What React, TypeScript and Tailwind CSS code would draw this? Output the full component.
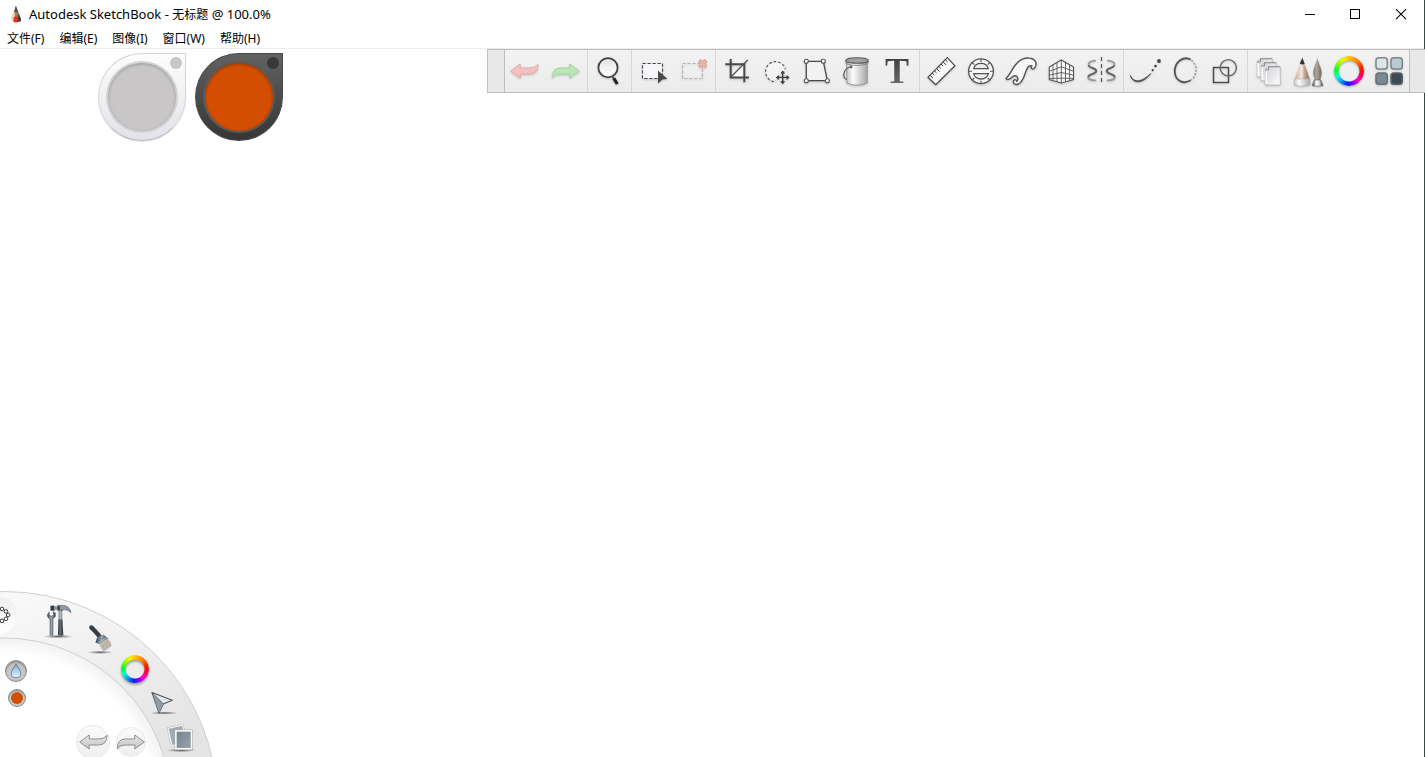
import type { ReactNode } from "react";

const menus = ["文件(F)", "编辑(E)", "图像(I)", "窗口(W)", "帮助(H)"];

function Icon({ children }: { children: ReactNode }) {
  return (
    <svg
      viewBox="0 0 40 42"
      className="h-[42px] w-10 drop-shadow-[0_1px_1px_rgba(0,0,0,0.18)]"
      fill="none"
      stroke="#555"
      strokeWidth="1.4"
      aria-hidden="true"
    >
      {children}
    </svg>
  );
}

function Wheel({ className }: { className: string }) {
  return (
    <span
      className={
        "block rounded-full bg-[conic-gradient(#ffc400_0deg,#ff8000_40deg,#ff1500_80deg,#ff0040_105deg,#ff00d0_135deg,#8a00ff_160deg,#0020ff_188deg,#00a8ff_220deg,#00ffd0_245deg,#00ff20_275deg,#a0ff00_310deg,#fff000_338deg,#ffc400_360deg)] " +
        className
      }
    />
  );
}

const undoPath = "M5.7 21L15.2 14V18H24.5Q30.5 18 33 14.3Q33 24 24.5 24H15.2V28Z";
const redoPath = "M34.3 21L24.8 14V18H15.3Q7.3 18 7.3 28Q9.3 24 15.3 24H24.8V28Z";

type Tool = { label: string; icon: ReactNode };

const groups: { pad: string; tools: Tool[] }[] = [
  {
    pad: "pr-0.5",
    tools: [
      { label: "撤消", icon: <Icon><path d={undoPath} fill="#f3c2be" stroke="#e6aaa6" strokeWidth="1" /></Icon> },
      { label: "重做", icon: <Icon><path d={redoPath} fill="#bde6b8" stroke="#a3d69e" strokeWidth="1" /></Icon> },
    ],
  },
  {
    pad: "pl-px pr-0.5",
    tools: [
      {
        label: "缩放",
        icon: (
          <Icon>
            <circle cx="19" cy="17.7" r="9.6" fill="url(#glass)" stroke="#444" strokeWidth="1.8" />
            <path d="M23.5 26.5L25 29" stroke="#555" strokeWidth="2" />
            <path d="M24.8 28.4L28.3 34" stroke="#222" strokeWidth="3.2" />
          </Icon>
        ),
      },
    ],
  },
  {
    pad: "pl-px pr-0.5",
    tools: [
      {
        label: "选择",
        icon: (
          <Icon>
            <rect x="9.5" y="13.5" width="20" height="15" fill="#f6f6fa" stroke="#444" strokeWidth="1.1" strokeDasharray="3.2 1.8" />
            <path d="M25 20.5L34.5 29L29.5 29.4L25 33.5Z" fill="#4a4a4a" stroke="none" />
          </Icon>
        ),
      },
      {
        label: "取消选择",
        icon: (
          <Icon>
            <rect x="9.5" y="13.5" width="20" height="15" stroke="#b5b5b5" strokeWidth="1.2" strokeDasharray="3.2 1.8" />
            <path d="M26.4 10.4L33 17M33 10.4L26.4 17" stroke="#dc9c98" strokeWidth="3.8" />
            <path d="M27 11L32.4 16.4M32.4 11L27 16.4" stroke="#f0b4b0" strokeWidth="2.2" />
          </Icon>
        ),
      },
    ],
  },
  {
    pad: "pl-px pr-0.5",
    tools: [
      {
        label: "裁剪",
        icon: (
          <Icon>
            <path d="M14 27L27 14V27Z" fill="#fafafa" stroke="none" />
            <path d="M14 27L30.7 10" strokeWidth="1.2" />
            <path d="M13.7 9V27.5H32M8.3 14.3H27.3V32.3" stroke="#484848" strokeWidth="2" />
          </Icon>
        ),
      },
      {
        label: "快速变换",
        icon: (
          <Icon>
            <path d="M17 31.5A10 10 0 1 1 28.3 19" stroke="#555" strokeWidth="1.2" strokeDasharray="2.6 2" fill="#f4f4f4" />
            <path d="M25.7 21.5V33.3M19.8 27.4H31.6" stroke="#3c3c3c" strokeWidth="1.4" />
            <path d="M25.7 20.5L28.2 23.6H23.2ZM25.7 34.3L28.2 31.2H23.2ZM18.8 27.4L21.9 24.9V29.9ZM32.6 27.4L29.5 24.9V29.9Z" fill="#3c3c3c" stroke="none" />
          </Icon>
        ),
      },
      {
        label: "扭曲",
        icon: (
          <Icon>
            <path d="M9.3 11.3H26.3L30.3 30.7H9.3Z" fill="#f2f2f2" stroke="#484848" strokeWidth="1.3" />
            <g fill="#fff" strokeWidth="1.1">
              <circle cx="9.3" cy="11.3" r="2" />
              <circle cx="26.3" cy="11.3" r="2" />
              <circle cx="30.3" cy="30.7" r="2" />
              <circle cx="9.3" cy="30.7" r="2" />
            </g>
          </Icon>
        ),
      },
      {
        label: "填充",
        icon: (
          <Icon>
            <path d="M9.8 11V33Q20 37.5 30.2 33V11Z" fill="url(#metal)" stroke="#8c8c8c" strokeWidth="0.8" />
            <ellipse cx="20" cy="10.5" rx="11.3" ry="2.8" fill="#a2a2a2" stroke="#5a5a5a" strokeWidth="1.1" />
            <path d="M9 11V13.5Q20 17.5 31 13.5V11" strokeWidth="0.8" stroke="#777" />
            <path d="M14 16.7Q7 18.5 6.7 25Q6.8 28.5 9.8 29.5" stroke="#555" strokeWidth="1.1" />
            <circle cx="14" cy="16.7" r="1.5" fill="#666" stroke="none" />
          </Icon>
        ),
      },
      {
        label: "文本",
        icon: (
          <span className="block bg-linear-to-b from-[#333] to-[#777] bg-clip-text text-center font-['Liberation_Serif',serif] text-[36px] leading-[42px] font-bold text-transparent">
            T
          </span>
        ),
      },
    ],
  },
  {
    pad: "pl-px pr-0.5",
    tools: [
      {
        label: "标尺",
        icon: (
          <Icon>
            <path d="M26.3 7.7L34 15.8L14.7 34.7L6.9 27.3Z" fill="#fafafa" stroke="#4a4a4a" strokeWidth="1.2" strokeLinejoin="round" />
            <path d="M9 25.3L12 28.2M11.2 23L13.3 25M13.4 20.8L15.5 22.8M15.6 18.6L18.6 21.5M17.8 16.4L19.9 18.4M20 14.2L22.1 16.2M22.2 12L25.2 14.9M24.4 9.8L26.5 11.8" strokeWidth="1" stroke="#333" />
          </Icon>
        ),
      },
      {
        label: "椭圆标尺",
        icon: (
          <Icon>
            <circle cx="20" cy="21.3" r="12.4" fill="#f7f7f7" strokeWidth="1.3" />
            <path d="M12.7 18.7Q14 13.3 20 13.3Q26 13.3 27.3 18.7ZM12.7 23.7H27.3Q26 29 20 29Q14 29 12.7 23.7Z" fill="#ececec" strokeWidth="1.3" />
            <path d="M20 9V12M20 30.8V33.8M7.6 21.3H11M29 21.3H32.4M11.3 12.6L13.3 14.6M28.7 12.6L26.7 14.6M11.3 30L13.3 28M28.7 30L26.7 28" strokeWidth="1.1" />
          </Icon>
        ),
      },
      {
        label: "曲线板",
        icon: (
          <Icon>
            <path
              d="M5 28.5C9 25 10 21 14 15.5C18 10 22 7.5 28 8C33 8.3 36 12 34.8 15.5C34.3 18.5 31.3 20 30.2 18C30 16.5 31 16 31 16C27.5 14.5 26 18.5 24.6 22C22.6 27.5 22 31.5 17.5 34C14.5 35.5 11.5 33.5 12.5 30.8C13.5 29 16 29.8 15.8 31.5C18 28.5 16.5 25.5 13.5 25.8C11 26.2 9.8 29 7.5 29.4C6.3 29.6 5.4 29.3 5 28.5Z"
              fill="#f7f7f7"
              strokeWidth="1.4"
              strokeLinejoin="round"
            />
          </Icon>
        ),
      },
      {
        label: "透视",
        icon: (
          <Icon>
            <path d="M8.3 17L20.3 10L32.5 17V29.5L20.3 33L8.3 29.5Z" fill="#fafafa" strokeWidth="1.1" />
            <path d="M20.3 10V33M12 15V30.5M16 12.6V31.7M24.5 12.6V31.7M28.6 15V30.5M8.3 21.3L20.3 16.8L32.5 21.3M8.3 25.2L20.3 22.5L32.5 25.2M8.3 28.4L20.3 28.2L32.5 28.4" strokeWidth="0.9" />
          </Icon>
        ),
      },
      {
        label: "对称",
        icon: (
          <Icon>
            <path d="M20.5 7V35" strokeDasharray="4 3" strokeWidth="1.2" />
            <g strokeLinecap="round">
              <path d="M14 10.7C8 11 6.5 13.8 8 16C10 18.5 15.3 18 15.3 21C15.3 24 9 23.5 7.5 26.2C6.5 29 9.5 30.5 14.5 30.3" stroke="#999" strokeWidth="1.8" />
              <path d="M8 16C10 18.5 15.3 18 15.3 21C15.3 24 9 23.5 7.5 26.2" stroke="#666" strokeWidth="2" />
              <path d="M27 10.7C33 11 34.5 13.8 33 16C31 18.5 25.7 18 25.7 21C25.7 24 32 23.5 33.5 26.2C34.5 29 31.5 30.5 26.5 30.3" stroke="#999" strokeWidth="1.8" />
              <path d="M33 16C31 18.5 25.7 18 25.7 21C25.7 24 32 23.5 33.5 26.2" stroke="#666" strokeWidth="2" />
            </g>
          </Icon>
        ),
      },
    ],
  },
  {
    pad: "pl-px pr-0.5",
    tools: [
      {
        label: "稳定笔画",
        icon: (
          <Icon>
            <path d="M5.3 25.5C9 33.5 17 32 25.8 23.5C18 34 8 34.5 5.3 25.5Z" fill="#444" stroke="#555" strokeWidth="0.9" />
            <g fill="#444" stroke="none">
              <circle cx="27.7" cy="20.2" r="1.1" />
              <circle cx="30.5" cy="16" r="1.3" />
              <circle cx="34" cy="11" r="1.9" />
            </g>
          </Icon>
        ),
      },
      {
        label: "预测笔画",
        icon: (
          <Icon>
            <path d="M25 9.3C17 5.5 9.3 13.5 9.8 22C10.3 31 18.5 34.5 25 30.6" strokeWidth="1.8" strokeLinecap="round" />
            <path d="M26.5 10.3C33 15 32.5 25.5 26 30" stroke="#999" strokeWidth="1.5" strokeDasharray="2 1.6" />
          </Icon>
        ),
      },
      {
        label: "形状",
        icon: (
          <Icon>
            <rect x="8.5" y="17.5" width="15" height="15" stroke="#484848" />
            <circle cx="23.3" cy="17.7" r="8.1" stroke="#666" />
          </Icon>
        ),
      },
    ],
  },
  {
    pad: "pl-px",
    tools: [
      {
        label: "图层",
        icon: (
          <Icon>
            <g fill="url(#paper)" stroke="#b0b0b0" strokeWidth="0.7">
              <path d="M8.3 11.7L11.3 8.7H23.3V27H8.3Z" />
              <path d="M12.3 15.7L15.3 12.7H27.3V31H12.3Z" />
              <path d="M16.3 19.7L19.3 16.7H31.3V35H16.3Z" />
            </g>
            <path d="M8.3 11.9H11.5V8.7H23M12.3 15.9H15.5V12.7H27M16.3 19.9H19.5V16.7H31" stroke="#888" strokeWidth="0.9" />
            <path d="M9.2 13V26M13.2 17V30M17.2 21V34" stroke="#fff" />
          </Icon>
        ),
      },
      {
        label: "画笔库",
        icon: (
          <Icon>
            <path d="M13.3 8L5.5 29.5H21Z" fill="url(#wood)" stroke="none" />
            <path d="M13.3 7.8L10.8 13.8Q13.3 15 15.7 13.8Z" fill="#333" stroke="none" />
            <path d="M5.4 29.5Q8 27.5 10.2 29.5Q13.3 27.5 16.2 29.5Q19 27.5 21 29.5V35Q13 37.5 5.4 35Z" fill="url(#metal)" stroke="#aaa" strokeWidth="0.5" />
            <path d="M28.3 8C27 14 24 19 24.4 24L25.8 30H31.3L32.6 24C33 19 29.8 14 28.3 8Z" fill="url(#bristle)" stroke="none" />
            <path d="M25.2 30H31.8L34 35.6Q28.5 37 23.2 35.6Z" fill="url(#chrome)" stroke="#555" strokeWidth="0.6" />
          </Icon>
        ),
      },
      {
        label: "颜色编辑器",
        icon: (
          <span className="block drop-shadow-[0_1px_1px_rgba(0,0,0,0.35)]">
            <Wheel className="m-[5px] size-[30px] mask-[radial-gradient(circle,transparent_10px,#000_11px)]" />
          </span>
        ),
      },
      {
        label: "界面",
        icon: (
          <Icon>
            <g strokeWidth="1.5">
              <rect x="7" y="7.7" width="11.3" height="11.3" rx="2.8" fill="#dce5e9" stroke="#7d878c" />
              <rect x="22" y="7.7" width="11.3" height="11.3" rx="2.8" fill="#b9cad2" stroke="#7d878c" />
              <rect x="7" y="23" width="11.3" height="11.3" rx="2.8" fill="#7a8a94" stroke="#66727a" />
              <rect x="22" y="23" width="11.3" height="11.3" rx="2.8" fill="#3e4a52" stroke="#59636a" />
            </g>
          </Icon>
        ),
      },
    ],
  },
];

function Gradients() {
  return (
    <svg className="absolute size-0" aria-hidden="true">
      <defs>
        <linearGradient id="glass" x1="0" y1="0" x2="0" y2="1">
          <stop offset="0" stopColor="#e3e3e3" />
          <stop offset="1" stopColor="#fff" />
        </linearGradient>
        <linearGradient id="metal">
          <stop offset="0" stopColor="#c9c9c9" />
          <stop offset="0.3" stopColor="#fdfdfd" />
          <stop offset="1" stopColor="#a6a6a6" />
        </linearGradient>
        <linearGradient id="chrome">
          <stop offset="0" stopColor="#444" />
          <stop offset="0.4" stopColor="#fff" />
          <stop offset="0.7" stopColor="#ccc" />
          <stop offset="1" stopColor="#333" />
        </linearGradient>
        <linearGradient id="wood">
          <stop offset="0" stopColor="#c7ae9c" />
          <stop offset="0.45" stopColor="#f4e6da" />
          <stop offset="0.7" stopColor="#b8997f" />
          <stop offset="1" stopColor="#85705f" />
        </linearGradient>
        <linearGradient id="bristle">
          <stop offset="0" stopColor="#827a72" />
          <stop offset="0.4" stopColor="#b0a69c" />
          <stop offset="1" stopColor="#6c645e" />
        </linearGradient>
        <linearGradient id="paper" x1="0" y1="0" x2="1" y2="1">
          <stop offset="0.2" stopColor="#d8d8de" />
          <stop offset="1" stopColor="#fff" />
        </linearGradient>
        <linearGradient id="steel">
          <stop offset="0" stopColor="#3b434b" />
          <stop offset="0.5" stopColor="#9aa6b1" />
          <stop offset="1" stopColor="#3a424a" />
        </linearGradient>
        <linearGradient id="grip">
          <stop offset="0" stopColor="#262c32" />
          <stop offset="0.4" stopColor="#66717b" />
          <stop offset="1" stopColor="#252b30" />
        </linearGradient>
        <linearGradient id="band" gradientUnits="userSpaceOnUse" x1="60" y1="0" x2="130" y2="170">
          <stop offset="0" stopColor="#f8f8f8" />
          <stop offset="1" stopColor="#e4e4e4" />
        </linearGradient>
        <linearGradient id="slate" x1="0" y1="0" x2="1" y2="1">
          <stop offset="0" stopColor="#75828e" />
          <stop offset="1" stopColor="#98a4ae" />
        </linearGradient>
        <linearGradient id="drop" x1="0" y1="0" x2="0" y2="1">
          <stop offset="0" stopColor="#7ba6d2" />
          <stop offset="1" stopColor="#e9f6ff" />
        </linearGradient>
        <linearGradient id="arrow" x1="0" y1="0" x2="0" y2="1">
          <stop offset="0" stopColor="#e8e8e8" />
          <stop offset="1" stopColor="#c2c2c2" />
        </linearGradient>
        <radialGradient id="shade">
          <stop offset="0" stopColor="#000" stopOpacity="0.6" />
          <stop offset="1" stopColor="#000" stopOpacity="0" />
        </radialGradient>
        <radialGradient id="hollow" gradientUnits="userSpaceOnUse" cx="4" cy="218" r="167">
          <stop offset="0.9" stopColor="#fff" />
          <stop offset="1" stopColor="#f2f2f2" />
        </radialGradient>
      </defs>
    </svg>
  );
}

function TitleBar() {
  return (
    <header className="flex h-[30px] items-center">
      <svg viewBox="0 0 16 20" className="ml-2 h-5 w-4" aria-hidden="true">
        <path d="M7.6 1.5L3.4 12.5V15.5L5.5 17H7V1.5Z" fill="#e9cfae" />
        <path d="M8.2 1.5L12.8 13V16L10.5 17H7V1.5Z" fill="#9c8069" />
        <path d="M9.6 8L12.8 13.5V16.2L10.2 17Z" fill="#3f3a38" />
        <path d="M8 1L5.9 6.8Q8 7.8 10.2 6.8Z" fill="#555" />
        <path d="M5.8 12.2Q8 10.6 10 12.2L10.4 17Q8 17.8 5.6 17Z" fill="#e0301e" />
      </svg>
      <h1 className="ml-[5px] text-[13px]">
        Autodesk SketchBook - <span className="text-xs">无标题</span> @ 100.0%
      </h1>
      <div className="ml-auto flex">
        <button aria-label="最小化" className="flex h-[30px] w-[45px] items-center justify-center">
          <svg viewBox="0 0 12 12" className="size-3" stroke="#000" shapeRendering="crispEdges"><path d="M1 5.5H11" /></svg>
        </button>
        <button aria-label="最大化" className="flex h-[30px] w-[46px] items-center justify-center">
          <svg viewBox="0 0 12 12" className="size-3" stroke="#000" fill="none" shapeRendering="crispEdges"><path d="M1.5 0.5H10.5V9.5H1.5Z" /></svg>
        </button>
        <button aria-label="关闭" className="flex h-[30px] w-[46px] items-center justify-center">
          <svg viewBox="0 0 12 12" className="size-3" stroke="#000" fill="none" strokeWidth="1.1"><path d="M1 0.2L11 10.2M11 0.2L1 10.2" /></svg>
        </button>
      </div>
    </header>
  );
}

function Toolbar() {
  return (
    <div role="toolbar" aria-label="工具栏" className="relative -mr-px ml-auto flex w-fit border-y border-l border-[#bfbfbf] bg-linear-to-b from-[#f2f2f2] to-[#ececec]">
      <div className="w-[17px] border-r border-[#bfbfbf] bg-[#e8e8e8]" />
      {groups.map((group) => (
        <div key={group.tools[0].label} className={"flex border-r border-[#d6d6da] last-of-type:border-[#bfbfbf] " + group.pad}>
          {group.tools.map((tool) => (
            <button key={tool.label} aria-label={tool.label} className="h-[42px] w-10">
              {tool.icon}
            </button>
          ))}
        </div>
      ))}
      <span className="w-[15px] bg-[#e8e8e8]" />
    </div>
  );
}

function Pucks() {
  return (
    <div className="absolute top-1 left-[98px] flex gap-[9px]">
      <button aria-label="画笔控制" className="relative size-[88px] rounded-full rounded-tr-[8px] border border-[#d6d6d9] border-b-[#b8b8bc] bg-linear-to-b from-[#fdfdfd] to-[#e2e3e8] p-[9px] shadow-[0_1px_1px_rgba(0,0,0,0.12)]">
        <span className="block size-[68px] rounded-full bg-[#c8c6c7] shadow-[0_0_0_2px_#d2d2d2,inset_0_1px_3px_#999]" />
        <span className="absolute top-[3px] right-[3px] size-3 rounded-full bg-[#c6c8ca]" />
      </button>
      <button aria-label="颜色控制" className="relative size-[88px] rounded-full rounded-tr-[6px] border border-[#4a4a4a] bg-linear-to-b from-[#626262] to-[#363636] p-[9px]">
        <span className="block size-[68px] rounded-full bg-[#d34e00] shadow-[0_0_0_2px_#5a5a5a,inset_0_1px_3px_#923600]" />
        <span className="absolute top-[3px] right-[3px] size-3 rounded-full bg-[#383838]" />
      </button>
    </div>
  );
}

function Lagoon() {
  return (
    <nav aria-label="工具环" className="absolute bottom-0 left-0 h-[170px] w-[220px] overflow-hidden">
      <svg viewBox="0 0 220 170" className="absolute inset-0 h-[170px] w-[220px]" aria-hidden="true">
        <circle cx="4" cy="218" r="213.5" fill="url(#band)" stroke="#d0d0d0" />
        <circle cx="4" cy="218" r="167" fill="url(#hollow)" stroke="#cfcfcf" />
      </svg>

      <button aria-label="画笔" className="absolute top-[10px] left-[-18px] size-9 rounded-full bg-linear-to-b from-[#eeeeee] to-white">
        <svg viewBox="0 0 36 36" className="size-9" fill="#fff" stroke="#222" strokeWidth="0.9">
          <circle cx="20" cy="12" r="1.8" />
          <circle cx="24" cy="14.4" r="1.8" />
          <circle cx="26.2" cy="18" r="1.8" />
          <circle cx="24" cy="21.8" r="1.8" />
          <circle cx="20" cy="23.9" r="1.8" />
        </svg>
      </button>

      <button aria-label="工具" className="absolute top-[14px] left-10 size-10">
        <svg viewBox="0 0 40 40" className="size-10">
          <ellipse cx="18" cy="35.5" rx="15" ry="1.8" fill="url(#shade)" />
          <path d="M7.4 13.5L9.3 10.8V14L11.5 15.2L13.5 13.8L13 10.6L15.4 12V15.5L13 18V34Q11.5 35.6 10 34V18L7.8 16.3Z" fill="url(#steel)" stroke="#4d5660" strokeWidth="0.5" />
          <path d="M18.9 9H21.9V19H18.9Z" fill="#aeb8c1" stroke="#59636c" strokeWidth="0.6" />
          <path d="M18.4 18.5H22.4L23.3 34Q20.6 36.2 18 34Z" fill="url(#grip)" />
          <path d="M10.8 4.9H14.3L15.2 6H17.6V4.4H23.5Q29.5 5 31 11.6Q27.5 8 23 8.6V9.4H17.6V8.2H15.2L14.3 9.4H10.8Z" fill="#8b97a2" stroke="#4b545c" strokeWidth="0.6" />
          <path d="M10.8 5H14V9.3H10.8ZM17.8 5H19.8V9H17.8Z" fill="#343c43" />
        </svg>
      </button>

      <button aria-label="画笔库" className="absolute top-8 left-20 size-10">
        <svg viewBox="0 0 40 40" className="size-10">
          <ellipse cx="20" cy="33.3" rx="13" ry="1.7" fill="url(#shade)" />
          <path d="M9.3 7.6Q10.5 5.6 12.6 6.5Q19 13 22 17L18.5 19.5Q14 13.5 9.3 9.4Z" fill="#343c44" />
          <path d="M17 18.5L23.5 15.5L28 19.5L19.3 25.3L15.5 23.5Z" fill="url(#steel)" />
          <path d="M19.3 25.3L28 19.5Q31.5 23 31.8 26.5L28.5 29.5L23.3 32.3Q20 28.5 19.3 25.3Z" fill="#c4bbb1" />
          <path d="M21.8 24.2L25.3 30.8M24.3 22.8L28 29M26.5 21.3L30 27.4" stroke="#9b9289" strokeWidth="0.6" />
          <path d="M18.3 24.2L27.5 18.2" stroke="#b8c4ce" strokeWidth="0.9" />
        </svg>
      </button>

      <button aria-label="颜色" className="absolute top-[68px] left-[121px] size-7 drop-shadow-[0_2px_1px_rgba(0,0,0,0.35)]">
        <Wheel className="size-7 mask-[radial-gradient(circle,transparent_9px,#000_10px)]" />
      </button>

      <button aria-label="变换" className="absolute top-[98px] left-[143px] size-9">
        <svg viewBox="0 0 36 36" className="size-9">
          <ellipse cx="21" cy="28" rx="14" ry="1.6" fill="url(#shade)" />
          <path d="M9 7.5L29.3 15.3L20.3 19L16 28Z" fill="#e3e6e9" stroke="#4f575f" strokeWidth="1.1" strokeLinejoin="round" />
          <path d="M9.5 8.3L20.3 19L16 28Z" fill="#939ba3" />
          <path d="M9 7.5L20.3 19" stroke="#4b535b" strokeWidth="0.8" />
        </svg>
      </button>

      <button aria-label="图层" className="absolute top-[132px] left-[162px] size-9">
        <svg viewBox="0 0 36 36" className="size-9">
          <ellipse cx="19" cy="31.3" rx="15" ry="1.8" fill="url(#shade)" />
          <path d="M6 9.3L20.5 6L24 23.5L10 27Z" fill="#a0abb5" stroke="#b5b5b5" strokeWidth="2.2" />
          <path d="M6 9.3L20.5 6L24 23.5L10 27Z" fill="#a0abb5" stroke="#f4f4f4" strokeWidth="1.3" />
          <rect x="13.9" y="11.9" width="15.6" height="17.8" fill="url(#slate)" stroke="#a6a6a6" strokeWidth="2.6" />
          <rect x="13.9" y="11.9" width="15.6" height="17.8" fill="url(#slate)" stroke="#fff" strokeWidth="1.5" />
        </svg>
      </button>

      <button aria-label="透明" className="absolute top-[73px] left-[5px] flex size-[22px] items-center justify-center rounded-full border border-[#8c8c8c] bg-[#c6c6c6] shadow-[inset_0_2px_1px_#999]">
        <svg viewBox="0 0 12 16" className="h-4 w-3">
          <path d="M6 1Q10.7 7.3 10.7 10.5Q10.5 14.7 6 14.7Q1.5 14.7 1.3 10.5Q1.3 7.3 6 1Z" fill="url(#drop)" stroke="#5f7fa3" strokeWidth="0.9" />
        </svg>
      </button>
      <button aria-label="当前颜色" className="absolute top-[102px] left-2 flex size-[18px] items-center justify-center rounded-full border border-[#8c8c8c] bg-[#c9c9c9] shadow-[inset_0_1px_1px_#888]">
        <span className="size-3 rounded-full bg-[#d34e00]" />
      </button>

      <button aria-label="撤消" className="absolute top-[138px] left-[76px] flex size-[34px] items-center justify-center rounded-full border border-[#e9e9e9] bg-linear-to-b from-[#fafafa] to-[#efefef]">
        <svg viewBox="4 13 30 16" className="h-4 w-[30px] shrink-0"><path d={undoPath} fill="url(#arrow)" stroke="#8e8e8e" /></svg>
      </button>
      <button aria-label="重做" className="absolute top-[140px] left-[116px] flex size-[30px] items-center justify-center rounded-full border border-[#e9e9e9] bg-linear-to-b from-[#fafafa] to-[#efefef]">
        <svg viewBox="6 13 30 16" className="h-4 w-[30px] shrink-0"><path d={redoPath} fill="url(#arrow)" stroke="#8e8e8e" /></svg>
      </button>
    </nav>
  );
}

export default function App() {
  return (
    <div className="flex min-h-screen flex-col border-r border-[#2f4a48] bg-white font-['Noto_Sans','Noto_Sans_CJK_SC',sans-serif] text-black">
      <Gradients />
      <TitleBar />
      <nav aria-label="菜单" className="flex h-[19px] items-end gap-[15px] border-b border-[#ececec] pl-[7px] text-xs">
        {menus.map((menu) => (
          <button key={menu} className="leading-[18px]">{menu}</button>
        ))}
      </nav>
      <main className="relative flex-1">
        <Toolbar />
        <Pucks />
        <Lagoon />
      </main>
    </div>
  );
}
